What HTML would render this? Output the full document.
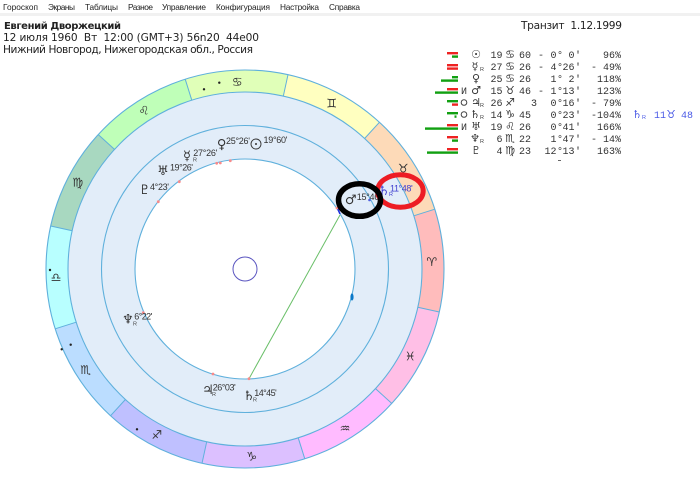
<!DOCTYPE html>
<html lang="ru"><head><meta charset="utf-8"><title>Транзит</title>
<style>
html,body{margin:0;padding:0;background:#fff;width:700px;height:488px;overflow:hidden}
svg{display:block}
text{white-space:pre}
.m{font:8.3px "Liberation Sans",sans-serif;fill:#222}
.h{font:10.6px "DejaVu Sans",sans-serif;fill:#222}
.t{font:10px "Liberation Mono",monospace;fill:#333}
.g{font:11px "DejaVu Sans",sans-serif;fill:#333;text-anchor:middle}
.r{font:5.5px "Liberation Sans",sans-serif;fill:#444}
.l{font:9px "Liberation Sans",sans-serif;fill:#333}
.z{font:12px "DejaVu Sans",sans-serif;fill:#333;text-anchor:middle;dominant-baseline:central}
.p{font:13px "DejaVu Sans",sans-serif;fill:#333;text-anchor:middle;dominant-baseline:central}
</style></head><body>
<svg width="700" height="488" viewBox="0 0 700 488" xmlns="http://www.w3.org/2000/svg">
<rect x="0" y="13" width="700" height="3" fill="#f1f1f1"/>
<text class="m" x="3" y="10" textLength="35">Гороскоп</text>
<text class="m" x="48" y="10" textLength="27">Экраны</text>
<text class="m" x="85" y="10" textLength="33">Таблицы</text>
<text class="m" x="128" y="10" textLength="25">Разное</text>
<text class="m" x="162" y="10" textLength="44">Управление</text>
<text class="m" x="216" y="10" textLength="54">Конфигурация</text>
<text class="m" x="280" y="10" textLength="39">Настройка</text>
<text class="m" x="329" y="10" textLength="31">Справка</text>

<text class="h" x="4" y="29" style="font-size:10px;font-weight:700" textLength="117">Евгений Дворжецкий</text>
<text class="h" x="3" y="41" textLength="256">12 июля 1960  Вт  12:00 (GMT+3) 56n20  44e00</text>
<text class="h" x="3" y="53" textLength="250">Нижний Новгород, Нижегородская обл., Россия</text>
<text class="h" x="521" y="29" textLength="101">Транзит  1.12.1999</text>

<!-- bars -->
<g>
<rect x="447" y="52" width="11" height="2.4" fill="#ee2222"/><rect x="452" y="55.4" width="6" height="2.4" fill="#11a011"/>
<rect x="447" y="64" width="11" height="2.4" fill="#ee2222"/><rect x="447" y="67.4" width="11" height="2.4" fill="#ee2222"/>
<rect x="452" y="76" width="6" height="2.4" fill="#11a011"/><rect x="441" y="79.4" width="17" height="2.4" fill="#11a011"/>
<rect x="447" y="88" width="11" height="2.4" fill="#ee2222"/><rect x="435" y="91.4" width="23" height="2.4" fill="#11a011"/>
<rect x="447" y="100" width="11" height="2.4" fill="#11a011"/><rect x="452" y="103.4" width="6" height="2.4" fill="#ee2222"/>
<rect x="447" y="112" width="11" height="2.4" fill="#11a011"/><rect x="454.5" y="115.4" width="2" height="2.4" fill="#11a011"/>
<rect x="447" y="124" width="11" height="2.4" fill="#ee2222"/><rect x="425" y="127.4" width="33" height="2.4" fill="#11a011"/>
<rect x="447" y="136" width="11" height="2.4" fill="#ee2222"/><rect x="452" y="139.4" width="6" height="2.4" fill="#11a011"/>
<rect x="447" y="148" width="11" height="2.4" fill="#ee2222"/><rect x="427" y="151.4" width="31" height="2.4" fill="#11a011"/>
</g>
<text class="t" x="461" y="94">И</text>
<text class="t" x="461" y="130">И</text>
<circle cx="464" cy="102.5" r="2.8" fill="none" stroke="#444"/>
<circle cx="464" cy="114.5" r="2.8" fill="none" stroke="#444"/>

<!-- planet glyphs in table -->
<text class="g" x="476" y="58">☉</text>
<text class="g" x="475" y="70">☿</text><text class="r" x="480" y="71">R</text>
<text class="g" x="476" y="82">♀</text>
<text class="g" x="476" y="94">♂</text>
<text class="g" x="476" y="106">♃</text><text class="r" x="480" y="107">R</text>
<text class="g" x="475" y="118">♄</text><text class="r" x="480" y="119">R</text>
<text class="g" x="476" y="130">♅</text>
<text class="g" x="475" y="142">♆</text><text class="r" x="480" y="143">R</text>
<text class="g" x="476" y="154">♇</text>

<!-- table rows -->
<text class="t" y="58"><tspan x="490.5">19</tspan><tspan x="519">60</tspan><tspan x="538">-</tspan><tspan x="550.5">0</tspan><tspan x="557">°</tspan><tspan x="568.5">0</tspan><tspan x="575">'</tspan><tspan x="591">  96%</tspan></text>
<text class="t" y="70"><tspan x="490.5">27</tspan><tspan x="519">26</tspan><tspan x="538">-</tspan><tspan x="550.5">4</tspan><tspan x="557">°</tspan><tspan x="562.5">26</tspan><tspan x="575">'</tspan><tspan x="591">- 49%</tspan></text>
<text class="t" y="82"><tspan x="490.5">25</tspan><tspan x="519">26</tspan><tspan x="550.5">1</tspan><tspan x="557">°</tspan><tspan x="568.5">2</tspan><tspan x="575">'</tspan><tspan x="591"> 118%</tspan></text>
<text class="t" y="94"><tspan x="490.5">15</tspan><tspan x="519">46</tspan><tspan x="538">-</tspan><tspan x="550.5">1</tspan><tspan x="557">°</tspan><tspan x="562.5">13</tspan><tspan x="575">'</tspan><tspan x="591"> 123%</tspan></text>
<text class="t" y="106"><tspan x="490.5">26</tspan><tspan x="525"> 3</tspan><tspan x="550.5">0</tspan><tspan x="557">°</tspan><tspan x="562.5">16</tspan><tspan x="575">'</tspan><tspan x="591">- 79%</tspan></text>
<text class="t" y="118"><tspan x="490.5">14</tspan><tspan x="519">45</tspan><tspan x="550.5">0</tspan><tspan x="557">°</tspan><tspan x="562.5">23</tspan><tspan x="575">'</tspan><tspan x="591">-104%</tspan></text>
<text class="t" y="130"><tspan x="490.5">19</tspan><tspan x="519">26</tspan><tspan x="550.5">0</tspan><tspan x="557">°</tspan><tspan x="562.5">41</tspan><tspan x="575">'</tspan><tspan x="591"> 166%</tspan></text>
<text class="t" y="142"><tspan x="496.5">6</tspan><tspan x="519">22</tspan><tspan x="550.5">1</tspan><tspan x="557">°</tspan><tspan x="562.5">47</tspan><tspan x="575">'</tspan><tspan x="591">- 14%</tspan></text>
<text class="t" y="154"><tspan x="496.5">4</tspan><tspan x="519">23</tspan><tspan x="544.5">12</tspan><tspan x="557">°</tspan><tspan x="562.5">13</tspan><tspan x="575">'</tspan><tspan x="591"> 163%</tspan></text>
<rect x="558" y="160" width="3" height="1" fill="#666"/>
<text class="g" x="510" y="58">♋</text>
<text class="g" x="510" y="70">♋</text>
<text class="g" x="510" y="82">♋</text>
<text class="g" x="510" y="94">♉</text>
<text class="g" x="510" y="106">♐</text>
<text class="g" x="510" y="118">♑</text>
<text class="g" x="510" y="130">♌</text>
<text class="g" x="510" y="142">♏</text>
<text class="g" x="510" y="154">♍</text>

<!-- transit blue in table -->
<text class="g" x="637" y="118" style="fill:#4a5ae6">♄</text>
<text class="r" x="642" y="119" style="fill:#4a5ae6">R</text>
<text class="t" x="654" y="118" style="fill:#4a5ae6">11</text>
<text class="g" x="671" y="118" style="fill:#4a5ae6">♉</text>
<text class="t" x="681" y="118" style="fill:#4a5ae6">48</text>

<!-- wheel -->
<g transform="translate(245 269)">
<circle r="176.5" fill="#e2edf9"/>
<g fill="none" stroke-width="22">
<path stroke="#e0ffb8" d="M-56.5 -179.3A188 188 0 0 1 40.7 -183.5"/>
<path stroke="#ffffc0" d="M40.7 -183.5A188 188 0 0 1 127 -138.6"/>
<path stroke="#fddab8" d="M127 -138.6A188 188 0 0 1 179.3 -56.5"/>
<path stroke="#ffbcbc" d="M179.3 -56.5A188 188 0 0 1 183.5 40.7"/>
<path stroke="#ffbfe6" d="M183.5 40.7A188 188 0 0 1 138.6 127"/>
<path stroke="#ffbbff" d="M138.6 127A188 188 0 0 1 56.5 179.3"/>
<path stroke="#dcc0ff" d="M56.5 179.3A188 188 0 0 1 -40.7 183.5"/>
<path stroke="#bfc0ff" d="M-40.7 183.5A188 188 0 0 1 -127 138.6"/>
<path stroke="#bbddff" d="M-127 138.6A188 188 0 0 1 -179.3 56.5"/>
<path stroke="#b8ffff" d="M-179.3 56.5A188 188 0 0 1 -183.5 -40.7"/>
<path stroke="#a8d8c0" d="M-183.5 -40.7A188 188 0 0 1 -138.6 -127"/>
<path stroke="#bfffb8" d="M-138.6 -127A188 188 0 0 1 -56.5 -179.3"/>
</g>
<g stroke="#5fb0dc" stroke-width="1">
<line x1="-53.2" y1="-168.8" x2="-59.8" y2="-189.8"/>
<line x1="38.3" y1="-172.8" x2="43" y2="-194.3"/>
<line x1="119.6" y1="-130.5" x2="134.4" y2="-146.7"/>
<line x1="168.8" y1="-53.2" x2="189.8" y2="-59.8"/>
<line x1="172.8" y1="38.3" x2="194.3" y2="43"/>
<line x1="130.5" y1="119.6" x2="146.7" y2="134.4"/>
<line x1="53.2" y1="168.8" x2="59.8" y2="189.8"/>
<line x1="-38.3" y1="172.8" x2="-43" y2="194.3"/>
<line x1="-119.6" y1="130.5" x2="-134.4" y2="146.7"/>
<line x1="-168.8" y1="53.2" x2="-189.8" y2="59.8"/>
<line x1="-172.8" y1="-38.3" x2="-194.3" y2="-43"/>
<line x1="-130.5" y1="-119.6" x2="-146.7" y2="-134.4"/>
</g>
<g fill="none" stroke="#5fb0dc" stroke-width="1.1">
<circle r="199"/><circle r="177"/><circle r="143.5"/>
<circle r="110" fill="#fff"/>
</g>
<circle r="12" fill="none" stroke="#5a55c0" stroke-width="1"/>
</g>
<line x1="249" y1="378.7" x2="340" y2="215" stroke="#6abf69" stroke-width="1"/>
<line x1="337.5" y1="208" x2="340" y2="214" stroke="#2030e0" stroke-width="1.6"/>
<ellipse cx="352" cy="297" rx="1.6" ry="3.6" fill="#0a78c8"/>
<g fill="#f98a8a">
<circle cx="158.3" cy="201.7" r="1.4"/><circle cx="179.3" cy="181.7" r="1.4"/><circle cx="216.7" cy="163.3" r="1.4"/>
<circle cx="220.3" cy="163" r="1.4"/><circle cx="230.3" cy="160.7" r="1.4"/><circle cx="143.3" cy="312.7" r="1.4"/>
<circle cx="213" cy="374" r="1.4"/><circle cx="249" cy="378.7" r="1.4"/><circle cx="337" cy="208" r="1.4"/>
</g>

<!-- zodiac glyphs -->
<text class="z" x="237.3" y="82">♋</text>
<text class="z" x="144" y="110.7">♌</text>
<text class="z" x="77.7" y="182.3">♍</text>
<text class="z" x="56" y="277.3">♎</text>
<text class="z" x="85.7" y="370">♏</text>
<text class="z" x="156.7" y="435">♐</text>
<text class="z" x="251.7" y="456.7">♑</text>
<text class="z" x="345" y="428.3">♒</text>
<text class="z" x="410.3" y="356.7">♓</text>
<text class="z" x="431.7" y="262">♈</text>
<text class="z" x="403.3" y="168.3">♉</text>
<text class="z" x="331.7" y="103.3">♊</text>
<g fill="#222">
<circle cx="204" cy="89.3" r="1.2"/><circle cx="219.3" cy="82.7" r="1.2"/><circle cx="50" cy="270" r="1.2"/>
<circle cx="61.7" cy="349.3" r="1.2"/><circle cx="70.7" cy="344.7" r="1.2"/><circle cx="137" cy="429.3" r="1.2"/>
</g>

<!-- planets -->
<circle cx="256" cy="144" r="5" fill="none" stroke="#333" stroke-width=".9"/><circle cx="256" cy="144" r="1" fill="#333"/>
<text class="l" x="263.5" y="143" textLength="24">19°60'</text>
<text class="p" x="221.7" y="145">♀</text>
<text class="l" x="226" y="144" textLength="24">25°26'</text>
<text class="p" x="187" y="156.7">☿</text><text class="r" x="193" y="161.5">R</text>
<text class="l" x="193.3" y="156" textLength="24">27°26'</text>
<text class="p" x="163" y="171.7">♅</text>
<text class="l" x="170" y="170.7" textLength="23">19°26'</text>
<text class="p" x="144.7" y="190.7">♇</text>
<text class="l" x="150" y="190" textLength="19">4°23'</text>
<text class="p" x="128" y="320">♆</text><text class="r" x="133" y="325.5">R</text>
<text class="l" x="134.3" y="319.5" textLength="18">6°22'</text>
<text class="p" x="208" y="390.7">♃</text><text class="r" x="212" y="396">R</text>
<text class="l" x="212.7" y="390.7" textLength="23">26°03'</text>
<text class="p" x="249" y="396.7">♄</text><text class="r" x="253" y="401.5">R</text>
<text class="l" x="254.3" y="396" textLength="22.4">14°45'</text>
<text class="p" x="350.7" y="200.7">♂</text>
<text class="l" x="356.7" y="200" textLength="24">15°46'</text>
<text class="p" x="384" y="191.7" style="fill:#4040d0">♄</text>
<text class="r" x="389" y="196" style="fill:#4040d0">R</text>
<text class="l" x="390" y="191.7" textLength="22.7" style="fill:#4040d0">11°48'</text>
<circle cx="369.5" cy="200" r="1.3" fill="#5060e0"/>

<ellipse cx="400.4" cy="191" rx="22.8" ry="16.3" fill="none" stroke="#ed1c24" stroke-width="5"/>
<ellipse cx="359.5" cy="200" rx="21" ry="16.3" fill="none" stroke="#000" stroke-width="5.5"/>
</svg>
</body></html>
